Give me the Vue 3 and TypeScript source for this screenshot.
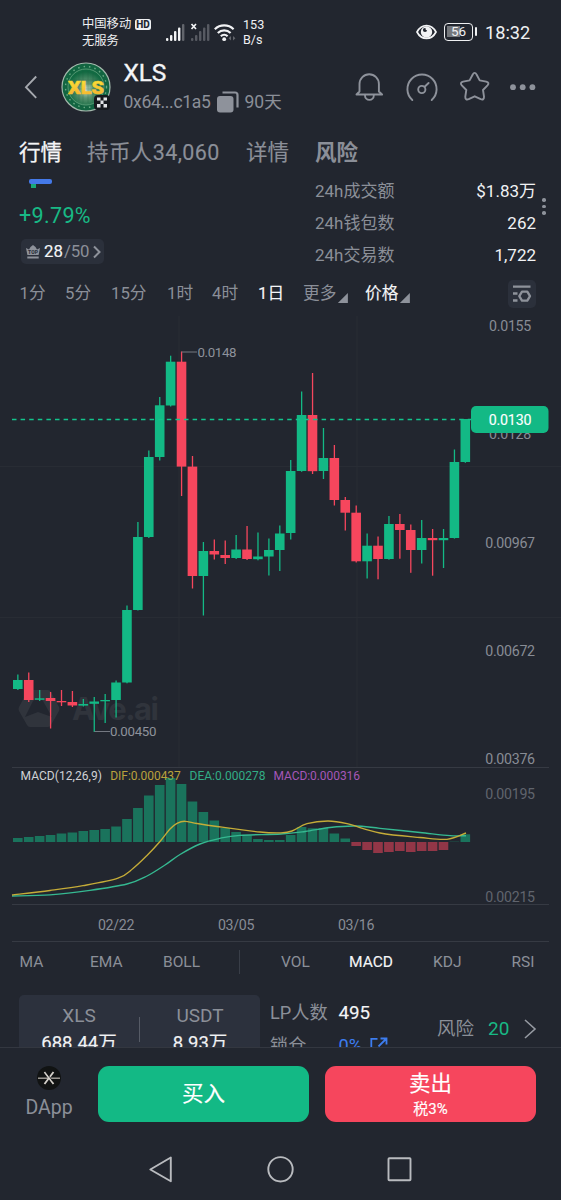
<script setup lang="ts">
interface Candle { x: number; up: boolean; high: number; top: number; bottom: number; low: number }
type Row = [0 | 1, number, number, number, number]
type Point = [number, number]

const STEP = 10.915
const FIRST = 17.8
const BASE = 842

const rows: Row[] = [
  [1, 674.5, 680, 689, 690], [0, 672.5, 680, 700, 702], [1, 690, 698.3, 699.8, 701], [0, 692, 698, 701, 728.5],
  [0, 690, 701, 702.3, 706], [0, 691, 702, 705.5, 707], [1, 699, 704, 705.6, 706.5], [1, 697, 701.5, 703.8, 732],
  [1, 694, 700, 701.3, 723], [1, 680.5, 682.5, 700, 717.5], [1, 605.5, 610, 682.5, 683.3], [1, 522, 537, 610, 610.5],
  [1, 450.5, 457, 537, 538], [1, 397, 405.3, 457, 460.5], [1, 355.7, 361.7, 405.5, 406.5], [0, 351.5, 361.7, 466.6, 496],
  [0, 456, 466.6, 576, 588.5], [1, 542, 551, 576, 615.5], [0, 539.5, 551, 554.5, 559.5], [0, 540.5, 555, 558, 564],
  [1, 535, 549.5, 558, 559], [0, 526, 549.5, 559, 560], [1, 532.5, 556.5, 559.2, 560.3], [1, 538.5, 550, 556.5, 575.5],
  [1, 525.5, 533.5, 550, 571], [1, 460, 471, 533, 539.5], [1, 391.5, 415, 471, 471.8], [0, 373, 415, 471.2, 474],
  [1, 428, 458, 471, 479], [0, 445, 458, 500, 505.5], [0, 497, 500, 512.7, 530.5], [0, 505.5, 512.7, 561.3, 562.5],
  [1, 533.5, 545.7, 561.3, 578.5], [0, 536.5, 545.7, 559, 579.3], [1, 516, 524, 559, 559.7], [0, 514, 524, 530, 558.7],
  [0, 524.5, 530, 550, 572.8], [1, 520, 538, 550, 563.5], [0, 529, 538, 540.2, 575.7], [1, 529, 538, 540.2, 568],
  [1, 449.5, 462, 538, 538.6], [1, 419, 419, 462, 462.8],
]
const candles: Candle[] = rows.map(([up, high, top, bottom, low], i) => ({
  x: FIRST + i * STEP, up: up === 1, high, top, bottom, low,
}))

const heights = [
  4, 5, 6, 7, 8.5, 9.5, 11, 12, 13, 15.5, 23, 34, 46.5, 57, 64, 58, 40.5, 30, 21.5, 14, 10, 6.5, 3, 2, 2,
  7, 15, 13.7, 14, 8.5, 3.5, -4, -8, -11, -10, -9, -10, -9, -9, -8, 0.3, 7.7,
]
const bars = heights.map((h, i) => ({ x: FIRST + i * STEP - 4.8, y: h > 0 ? BASE - h : BASE, h: Math.abs(h), up: h > 0 }))

function smooth(p: Point[]): string {
  let d = `M${p[0][0]} ${p[0][1]}`
  for (let i = 0; i < p.length - 1; i++) {
    const a = p[Math.max(i - 1, 0)], b = p[i], c = p[i + 1], e = p[Math.min(i + 2, p.length - 1)]
    d += `C${b[0] + (c[0] - a[0]) / 6} ${b[1] + (c[1] - a[1]) / 6} ${c[0] - (e[0] - b[0]) / 6} ${c[1] - (e[1] - b[1]) / 6} ${c[0]} ${c[1]}`
  }
  return d
}
const dif = smooth([[12, 895], [50, 890.5], [83, 885.7], [118, 878.2], [133, 868.5], [147, 855.5], [160, 841.5], [170, 829], [177, 823.3], [185, 821.3], [197, 823.5], [217, 826.5], [260, 832], [281, 832.8], [292, 831], [307, 823.7], [328, 821], [347, 823.7], [380, 833], [420, 837.5], [447, 839.3], [466, 833]])
const dea = smooth([[12, 896], [50, 894.8], [90, 890.3], [127, 884], [147, 876], [165, 865], [180, 854.5], [200, 844], [220, 838.3], [240, 835.3], [281, 834], [305, 831.5], [330, 827.5], [355, 826], [380, 828.3], [420, 832.5], [450, 835.7], [466, 835.7]])

const priceAxis = [
  { t: '0.0155', y: 331 }, { t: '0.0128', y: 439 }, { t: '0.00967', y: 547.5 }, { t: '0.00672', y: 656 }, { t: '0.00376', y: 764 },
]
const dates = [{ t: '02/22', x: 116 }, { t: '03/05', x: 236 }, { t: '03/16', x: 356 }]
const frames = ['1分', '5分', '15分', '1时', '4时', '1日']
const stats = [
  { k: '24h成交额', v: '$1.83万' }, { k: '24h钱包数', v: '262' }, { k: '24h交易数', v: '1,722' },
]
const indicators = ['MA', 'EMA', 'BOLL', '', 'VOL', 'MACD', 'KDJ', 'RSI']
</script>

<template>
  <main class="screen">
    <header class="status">
      <div class="carrier">
        <div class="carrier-line">中国移动<b class="hd">HD</b></div>
        <div class="carrier-line">无服务</div>
      </div>
      <svg class="signals" width="72" height="24" viewBox="165 20 72 24">
        <g fill="#f2f3f5">
          <rect x="166" y="38" width="2.4" height="3" rx="1" /><rect x="170" y="35" width="2.4" height="6" rx="1" />
          <rect x="174" y="31" width="2.4" height="10" rx="1" /><rect x="178" y="27.500" width="2.400" height="13.500" rx="1" />
        </g>
        <rect x="182" y="24" width="2.4" height="17" rx="1" fill="#62656c" />
        <g fill="#575a62">
          <rect x="191" y="38" width="2.4" height="3" rx="1" /><rect x="195" y="35" width="2.4" height="6" rx="1" />
          <rect x="199" y="31" width="2.4" height="10" rx="1" /><rect x="203" y="27.500" width="2.400" height="13.500" rx="1" />
          <rect x="207" y="24" width="2.400" height="17" rx="1" />
        </g>
        <path d="M191.500 24l4.500 5M196 24l-4.500 5" stroke="#f2f3f5" stroke-width="1.700" />
        <g fill="none" stroke="#f2f3f5" stroke-width="2.200">
          <path d="M214.800 29.200a13.700 13.700 0 0 1 18.800 0" /><path d="M217.800 33a9.300 9.300 0 0 1 12.800 0" /><path d="M220.800 36.200a5 5 0 0 1 6.800 0" />
        </g>
        <circle cx="224.200" cy="39.200" r="1.900" fill="#f2f3f5" />
        <path d="M231 36l-2.400 2.200 2.400 2.200zM233 36l2.400 2.200-2.400 2.200z" fill="#62656c" />
      </svg>
      <div class="speed"><span>153</span><span>B/s</span></div>
      <svg class="eye" width="21" height="16" viewBox="0 0 21 16">
        <path d="M1 8C5.500-.6 15.500-.6 20 8 15.500 16.600 5.500 16.600 1 8z" fill="none" stroke="#f2f3f5" stroke-width="1.700" />
        <circle cx="10.500" cy="8" r="5.700" fill="#f2f3f5" /><circle cx="9" cy="6" r="2.100" fill="#22262f" /><circle cx="11" cy="4.800" r="1.500" fill="#f2f3f5" />
      </svg>
      <div class="battery"><span>56</span></div>
      <i class="nub"></i>
      <span class="clock">18:32</span>
    </header>

    <section class="token">
      <svg class="back" width="14" height="24" viewBox="0 0 14 24"><path d="M12.200 1.500L2 12.200l10.200 10.600" /></svg>
      <svg class="avatar" width="50" height="50" viewBox="0 0 50 50">
        <defs>
          <radialGradient id="coin" cx=".5" cy=".58"><stop offset="0" stop-color="#c0dbc5" /><stop offset=".45" stop-color="#5b9370" /><stop offset="1" stop-color="#126a42" /></radialGradient>
          <linearGradient id="gold" x2="0" y2="1"><stop offset="0" stop-color="#f8f13a" /><stop offset="1" stop-color="#f9a42c" /></linearGradient>
        </defs>
        <circle cx="25" cy="25" r="24" fill="#126541" stroke="#a3b8ac" stroke-width="1.200" />
        <circle cx="25" cy="25" r="20.500" fill="none" stroke="#67a983" stroke-width="1.400" stroke-dasharray="1.500 4" />
        <circle cx="25" cy="25" r="18" fill="url(#coin)" stroke="#63a37e" stroke-width=".8" />
        <path d="M13 18h24M10 22h30M10 27h30M12 32h26M18 11v28M22 9v32M27 9v32M32 11v28" stroke="#225f43" stroke-width=".5" opacity=".5" />
        <text x="25" y="32" text-anchor="middle" textLength="36" lengthAdjust="spacingAndGlyphs" class="coin-text">XLS</text>
        <rect x="33" y="33" width="16" height="15" rx="4" fill="#171a1d" />
        <path d="M36 35.500h3.500v3H36zM42.500 35.500H46v3h-3.500zM39.500 38.500h3v3.500h-3zM36 42h3.500v3.500H36zM42.500 42H46v3.500h-3.500z" fill="#e1e3e4" />
      </svg>
      <div class="identity">
        <h1>XLS</h1>
        <div class="address"><span>0x64...c1a5</span>
          <svg width="22" height="22" viewBox="0 0 22 22"><rect x="0" y="5" width="16.500" height="16.500" rx="3" fill="#8e929b" /><path d="M5.500 1.500H18a2.500 2.500 0 0 1 2.500 2.500v12.500" fill="none" stroke="#8e929b" stroke-width="2.200" /></svg>
          <span class="age">90天</span></div>
      </div>
      <svg class="tools" width="182" height="34" viewBox="356 70 182 34" fill="none" stroke="#8e929b" stroke-width="1.900" stroke-linejoin="round" stroke-linecap="round">
        <path d="M360.500 91.500V84a9.700 9.700 0 0 1 19.400 0v7.500l3.200 3H357.500zM366 95.500a4.400 4.400 0 0 0 8.800 0" />
        <path d="M413.300 100a14.600 14.600 0 1 1 19.400 0" /><circle cx="422.800" cy="89.500" r="3.600" /><path d="M425.600 86.800l4-3.800" />
        <path d="M473.600 74.700q2-3.600 4.100 0l3 5.700 6.500 1.200q3.700 1 1.300 3.700l-4.500 4.700 1 6.700q.1 3.600-3.300 2.500l-6-2.900-6 2.900q-3.500 1.200-3.400-2.500l1-6.700-4.500-4.700q-2.300-2.700 1.300-3.700l6.500-1.200z" />
        <g fill="#8e929b" stroke="none"><circle cx="514" cy="87.200" r="2.900" /><circle cx="523.700" cy="87.200" r="2.900" /><circle cx="533.400" cy="87.200" r="2.900" /></g>
      </svg>
    </section>

    <nav class="tabs"><span class="active">行情</span><span class="holders">持币人34,060</span><span>详情</span><span class="risk">风险</span></nav>

    <section class="summary">
      <div class="quote">
        <div class="indicator"><i></i></div>
        <div class="change">+9.79%</div>
        <div class="rank">
          <svg width="14" height="14" viewBox="0 0 14 14"><path d="M0 3l3 1.500L4.500 2 7 0l2.500 2L11 4.500 14 3l-1.400 7H1.400zM1.300 11.500h11.400V13.500H1.300z" fill="#8e929b" /><text x="7" y="8.800" text-anchor="middle" class="top">TOP</text></svg>
          <b>28</b><span>/50</span>
          <svg width="8" height="14" viewBox="0 0 8 14"><path d="M1 1.500L6.500 7 1 12.500" fill="none" stroke="#8e929b" stroke-width="2" /></svg>
        </div>
      </div>
      <dl class="stats"><div v-for="s in stats" :key="s.k"><dt>{{ s.k }}</dt><dd>{{ s.v }}</dd></div></dl>
      <div class="dots"><i></i><i></i><i></i></div>
    </section>

    <nav class="frames">
      <span v-for="f in frames" :key="f" :class="{ active: f === '1日' }">{{ f }}</span>
      <span class="drop">更多<i></i></span><span class="drop active">价格<i></i></span>
      <div class="settings">
        <svg width="20" height="18" viewBox="0 0 20 18" fill="none" stroke="#8e929b" stroke-width="2.300"><path d="M1 1.700h17.500M1 8.500h4.500M1 15.500h4.500" /><path d="M10 6.700h5.300L18 11.200l-2.700 4.500H10l-2.700-4.500z" stroke-linejoin="round" /></svg>
      </div>
    </nav>

    <svg class="chart" width="561" height="632" viewBox="0 312 561 632">
      <g stroke="#282c34"><path d="M179 316V767M357 316V767M0 466.500H561M0 617.500H561" /></g>
      <g fill="#30343c">
        <path fill-rule="evenodd" d="M28 690h20a4 4 0 0 1 3 2l8 15q1 2 0 4l-8 14a4 4 0 0 1-3 2H30a4 4 0 0 1-3-2l-8-14q-1-2 0-4l8-15q1-2 3-2zM33 701L25 717l13-5 14 5-9-16q-4-5-10 0z" />
        <text x="72" y="720" class="brand" textLength="87">Ave.ai</text>
      </g>
      <g v-for="c in candles" :key="c.x" :fill="c.up ? '#13b985' : '#f6465d'">
        <rect :x="c.x - 0.6" :y="c.high" width="1.3" :height="c.low - c.high" />
        <rect :x="c.x - 4.8" :y="c.top" width="9.6" :height="c.bottom - c.top" />
      </g>
      <path class="price-line" d="M12 419.5H471" />
      <path d="M181.500 352H197M94.500 731.500H110" stroke="#747881" />
      <g class="note"><text x="197.500" y="356.800" textLength="39">0.0148</text><text x="110" y="736" textLength="46.500">0.00450</text></g>
      <g class="axis"><text v-for="p in priceAxis" :key="p.t" x="510" :y="p.y">{{ p.t }}</text></g>
      <rect x="471" y="406" width="77.500" height="27" rx="5" fill="#13b985" />
      <text x="510" y="424.900" class="current">0.0130</text>
      <path d="M12 767.500H549M12 904.500H549M12 941.500H549" stroke="#363a43" />
      <g class="legend">
        <text x="20.500" y="780.300" textLength="81.500" fill="#d0d2d6">MACD(12,26,9)</text>
        <text x="110.300" y="780.300" textLength="70.500" fill="#baa23c">DIF:0.000437</text>
        <text x="189.500" y="780.300" textLength="76" fill="#32ad86">DEA:0.000278</text>
        <text x="273.500" y="780.300" textLength="86.500" fill="#a557b8">MACD:0.000316</text>
      </g>
      <rect v-for="b in bars" :key="b.x" :x="b.x" :y="b.y" width="9.6" :height="b.h" :fill="b.up ? '#13b985' : '#f6465d'" opacity=".53" />
      <path :d="dea" fill="none" stroke="#35b991" stroke-width="1.350" />
      <path :d="dif" fill="none" stroke="#c5ac38" stroke-width="1.350" />
      <g class="axis dim"><text x="510" y="798.500">0.00195</text><text x="510" y="901.500">0.00215</text></g>
      <g class="axis"><text v-for="d in dates" :key="d.t" :x="d.x" y="929.5">{{ d.t }}</text></g>
    </svg>

    <nav class="indicators">
      <template v-for="n in indicators" :key="n"><span v-if="n" :class="{ active: n === 'MACD' }">{{ n }}</span><i v-else></i></template>
    </nav>

    <section class="pool">
      <div class="pair">
        <div><span>XLS</span><b>688.44万</b></div><i></i><div><span>USDT</span><b>8.93万</b></div>
      </div>
      <div class="lp">
        <div><span>LP人数</span><b>495</b></div>
        <div><span>锁仓</span><em>0%</em><svg width="18" height="18" viewBox="0 0 18 18" fill="none" stroke="#3d7df0" stroke-width="1.800"><path d="M7.500 1.800H1.300v15h15v-5.300M10.500 1.500h6v6M16.500 1.500l-8 8" /></svg></div>
      </div>
      <div class="score"><span>风险</span><b>20</b><svg width="13" height="20" viewBox="0 0 13 20"><path d="M1 1l10 9-10 9" fill="none" stroke="#969aa2" stroke-width="1.600" /></svg></div>
    </section>

    <footer class="actions">
      <div class="dapp">
        <svg width="26" height="24" viewBox="0 0 26 24"><circle cx="13" cy="12" r="12" fill="#111313" /><path d="M2 12.200h22" stroke="#b3aea7" stroke-width="1.300" /><path d="M8.500 6l9 12M17.500 6l-9 12" stroke="#d4d0ca" stroke-width="1.800" /><path d="M9.500 5.500l7.500 10" stroke="#111313" stroke-width=".7" /></svg>
        <span>DApp</span>
      </div>
      <button class="buy">买入</button>
      <button class="sell"><span>卖出</span><small>税3%</small></button>
    </footer>

    <svg class="system" width="561" height="78" viewBox="0 1122 561 78" fill="none" stroke="#b9bbbf" stroke-width="1.900" stroke-linejoin="round">
      <path d="M150.300 1169.500L170.800 1157.500V1181.300z" /><circle cx="280.500" cy="1169.300" r="12.200" /><rect x="388.500" y="1158.300" width="22" height="22" rx=".8" />
    </svg>
  </main>
</template>

<style>
html, body { background: #22262f; }
</style>

<style scoped>
* { box-sizing: border-box; }
.screen { width: 561px; height: 1200px; overflow: hidden; background: #22262f; color: #8b8f98; font-family: Roboto, "Noto Sans CJK SC", sans-serif; display: flex; flex-direction: column; }
.screen > * { flex: none; }
.active { color: #f4f5f7; -webkit-text-stroke: .12px currentColor; }
i, em { font-style: normal; }

.status { height: 54px; padding: 9px 0 0 82px; display: grid; grid-template-columns: 83px 78px 173px 28px 31px 10px 60px; align-items: center; color: #eff0f2; }
.carrier { display: grid; grid-template-rows: 17px 17px; padding-top: 2px; }
.carrier-line { display: flex; align-items: center; font-size: 12.300px; line-height: 17px; }
.hd { margin-left: 4px; padding: 0 1px; height: 11px; border-radius: 2.500px; background: #eff0f2; color: #22262f; font-size: 10px; line-height: 11px; font-weight: 800; }
.signals { margin-top: 1px; }
.speed { display: flex; flex-direction: column; font-size: 12.600px; line-height: 15px; padding-top: 1px; }
.battery { width: 29px; height: 18px; border: 1.700px solid #eff0f2; border-radius: 4px; background: linear-gradient(90deg, #74777c 58%, transparent 58%) 2px 2px / 22px 11px no-repeat; font-size: 13.500px; line-height: 15.500px; text-align: center; }
.nub { width: 2px; height: 9px; border-radius: 1px; background: #eff0f2; }
.clock { font-size: 18.200px; line-height: 22px; padding-top: 2px; }

.token { height: 66px; display: grid; grid-template-columns: 37px 62px 232px 182px; padding-left: 24px; align-items: center; }
.back path { fill: none; stroke: #a6a9af; stroke-width: 1.900; }
.coin-text { font-family: Roboto, sans-serif; font-weight: 900; font-size: 19px; fill: url(#gold); stroke: #f6c733; stroke-width: .5px; }
.identity { display: grid; grid-template-rows: 31px 29px; align-items: center; margin-top: -1px; padding-left: .5px; }
h1 { margin: 0; color: #f4f5f7; font-size: 24.500px; font-weight: 400; line-height: 31px; letter-spacing: -.2px; -webkit-text-stroke: .35px currentColor; }
.address { display: flex; align-items: center; font-size: 17.500px; line-height: 24px; letter-spacing: -.3px; }
.address > span:first-child { width: 93px; }
.address .age { margin-left: 6px; letter-spacing: 0; }

.tabs { height: 58px; padding: 8.500px 0 0 19px; display: grid; grid-template-columns: 68px 159px 69px 60px; align-items: center; font-size: 21.500px; line-height: 30px; -webkit-text-stroke: .15px currentColor; }
.tabs .active { -webkit-text-stroke-width: .3px; }
.tabs .risk { font-weight: 700; -webkit-text-stroke: 0; }
.tabs .holders { letter-spacing: .4px; }

.summary { height: 97px; display: grid; grid-template-columns: 296px 221px 16px; padding-left: 19px; }
.quote { display: flex; flex-direction: column; align-items: flex-start; }
.indicator { width: 23.500px; height: 5px; margin: 1px 0 0 9.500px; border-radius: 2px; background: #4479e8; }
.indicator i { display: block; width: 5px; height: 4px; margin-left: 2px; transform: translateY(5px); background: #18a978; }
.change { margin-top: 18px; height: 26px; color: #18b985; font-size: 21.500px; line-height: 27px; letter-spacing: .35px; }
.rank { width: 83px; height: 25px; margin: 11px 0 0 2px; padding-left: 5px; border-radius: 5px; background: #2b303b; display: flex; align-items: center; font-size: 16.800px; line-height: 25px; }
.rank b { margin-left: 4px; color: #f4f5f7; font-weight: 400; -webkit-text-stroke: .15px currentColor; }
.rank span { width: 29px; margin-left: 1px; letter-spacing: -.1px; }
.top { font-size: 5px; font-weight: 900; fill: #2b303b; }
.stats { margin: -3px 0 0; display: grid; grid-template-rows: repeat(3, 32px); font-size: 17px; line-height: 32px; }
.stats div { display: flex; justify-content: space-between; }
.stats dd { margin: 0; color: #f1f2f4; }
.dots { display: flex; flex-direction: column; gap: 3px; padding: 20px 0 0 6px; }
.dots i { width: 3.500px; height: 3.500px; border-radius: 50%; background: #8e929b; }

.frames { height: 37px; padding-left: 19.500px; display: grid; grid-template-columns: 45.500px 46px 56px 45px 46px 45px 62px 143px 28px; align-items: center; font-size: 16.700px; line-height: 24px; }
.frames .drop { display: flex; align-items: center; }
.drop i { width: 10px; height: 10px; margin: 9px 0 0 1.500px; background: #8e929b; clip-path: polygon(100% 0, 100% 100%, 0 100%); }
.settings { width: 28px; height: 28px; border-radius: 5px; background: #2b303b; display: grid; place-items: center; }

.chart { display: block; font-family: Roboto, sans-serif; }
.price-line { fill: none; stroke: #13c48c; stroke-width: 1.3; stroke-dasharray: 4.5 4.1; }
.brand { font-family: Inter, sans-serif; font-size: 31px; font-weight: 700; }
.note { font-size: 13.300px; fill: #8e929b; }
.axis { font-size: 14.200px; letter-spacing: -.3px; fill: #888c95; text-anchor: middle; }
.axis.dim { fill: #60646d; }
.current { font-size: 14.200px; letter-spacing: -.2px; fill: #fff; stroke: #fff; stroke-width: .12px; text-anchor: middle; }
.legend { font-size: 12px; }

.indicators { height: 51px; padding: 0 0 16px 19.500px; display: grid; grid-template-columns: 70.500px 73px 76px 42px 68px 84px 78.500px 30px; align-items: center; font-size: 15.500px; line-height: 20px; }
.indicators i { width: 1px; height: 24px; background: #393e48; }

.pool { height: 52px; overflow: hidden; padding-left: 19px; display: grid; grid-template-columns: 251px 167px 110px; }
.pair { width: 241px; height: 68px; border-radius: 5px 5px 0 0; background: #2c313d; display: grid; grid-template-columns: 120px 1px 120px; }
.pair > div { display: flex; flex-direction: column; align-items: center; padding-top: 7px; }
.pair > i { height: 25px; margin-top: 22px; background: #565b66; }
.pair span { font-size: 19px; line-height: 27px; }
.pair b { font-size: 18.500px; font-weight: 400; line-height: 28px; color: #f1f2f4; -webkit-text-stroke: .15px currentColor; }
.lp { padding-top: 1px; }
.lp div { display: grid; grid-template-columns: 68.500px 31px 20px; height: 33px; align-items: center; font-size: 18.200px; line-height: 32px; }
.lp b { color: #f4f5f7; font-weight: 400; font-size: 18.800px; -webkit-text-stroke: .15px currentColor; }
.lp em { color: #3d7df0; }
.score { display: grid; grid-template-columns: 51px 36px 13px; align-items: center; height: 68px; font-size: 18.500px; line-height: 28px; }
.score b { font-weight: 400; font-size: 19px; color: #18b985; }

.actions { height: 75px; padding: 17.500px 0 0; border-top: 1px solid #333740; display: grid; grid-template-columns: 98px 211px 16px 211px; align-items: start; }
.dapp { display: flex; flex-direction: column; align-items: center; font-size: 19.500px; line-height: 28px; }
.dapp span { margin-top: 4px; }
button { height: 56.500px; padding: 0; border: 0; border-radius: 11px; color: #fff; font: 400 21.500px/30px Roboto, "Noto Sans CJK SC", sans-serif; -webkit-text-stroke: .15px currentColor; }
.buy { background: #13b985; }
.sell { grid-column: 4; background: #f6465d; display: flex; flex-direction: column; align-items: center; justify-content: flex-start; padding-top: 3px; }
.sell small { font-size: 15px; line-height: 20px; }
.system { display: block; }
</style>
